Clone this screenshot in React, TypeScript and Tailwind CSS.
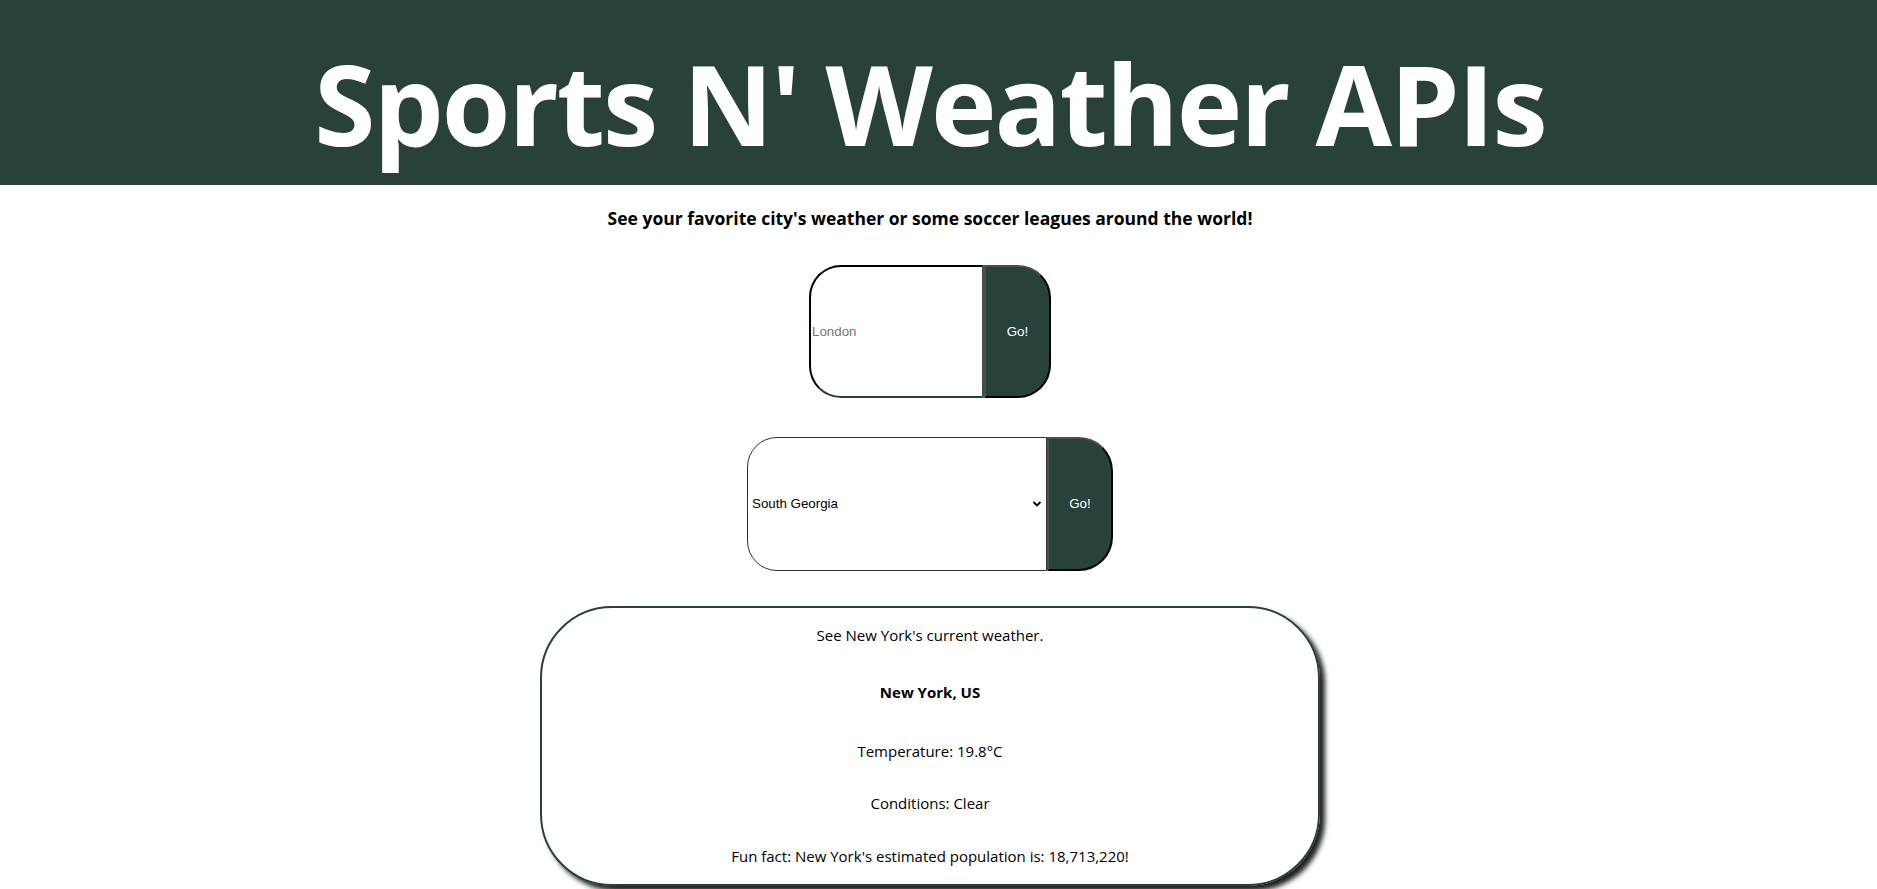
import React from "react";

export default function App() {
  return (
    <div className="min-h-screen bg-white text-black" style={{ fontFamily: '"Open Sans", "Noto Sans", sans-serif' }}>
      <header className="w-full bg-[#28413b] pt-[48px] pb-[26px]">
        <h1 className="pr-[17px] text-center text-[111px] font-bold leading-[111px] text-white tracking-[-2px]">
          Sports N' Weather APIs
        </h1>
      </header>
      <main className="flex flex-col items-center pr-[17px]">
        <p className="mt-[21px] text-[17.5px] font-bold leading-[24px]">
          See your favorite city's weather or some soccer leagues around the world!
        </p>

        <form className="mt-[35px] flex h-[133px]" onSubmit={(e) => e.preventDefault()}>
          <input
            type="text"
            placeholder="London"
            className="h-full w-[175px] rounded-l-[32px] border-2 border-t-black border-l-black border-b-[#2a3f39] border-r-[#4a4a4a] bg-white px-[1px] text-[13.33px] text-black placeholder:text-[#767676] outline-none"
            style={{ fontFamily: '"Liberation Sans", Arial, sans-serif' }}
          />
          <button
            type="submit"
            className="h-full w-[67px] rounded-r-[33px] border-2 border-t-[#4a4f4d] border-l-[#4a4f4d] border-r-black border-b-black bg-[#27413b] text-[13.33px] text-white"
            style={{ fontFamily: '"Liberation Sans", Arial, sans-serif' }}
          >
            Go!
          </button>
        </form>

        <form className="mt-[39px] flex h-[134px]" onSubmit={(e) => e.preventDefault()}>
          <div className="relative h-full w-[300px]">
            <select
              defaultValue="South Georgia"
              className="h-full w-full appearance-none rounded-l-[30px] border border-[#333] bg-white pl-[4px] text-[13.33px] text-black outline-none"
              style={{ fontFamily: '"Liberation Sans", Arial, sans-serif' }}
            >
              <option>South Georgia</option>
              <option>England</option>
              <option>Spain</option>
            </select>
            <svg className="pointer-events-none absolute right-[5px] top-1/2 -mt-[4px]" width="10" height="8" viewBox="0 0 10 8">
              <path d="M1.5 2 L5 5.5 L8.5 2" stroke="black" strokeWidth="1.8" fill="none" />
            </svg>
          </div>
          <button
            type="submit"
            className="h-full w-[66px] rounded-r-[34px] border-2 border-t-[#4a4f4d] border-l-[#4a4f4d] border-r-black border-b-black bg-[#27413b] text-[13.33px] text-white"
            style={{ fontFamily: '"Liberation Sans", Arial, sans-serif' }}
          >
            Go!
          </button>
        </form>

        <section className="mt-[35px] mb-[10px] flex h-[280px] w-[780px] flex-col items-center rounded-[72px] border-2 border-[#28403a] text-[15px] leading-[21px] shadow-[5px_5px_5px_#222]">
          <p className="mt-[17px]">See New York's current weather.</p>
          <p className="mt-[36px] font-bold">New York, US</p>
          <p className="mt-[38px]">Temperature: 19.8°C</p>
          <p className="mt-[31px]">Conditions: Clear</p>
          <p className="mt-[32px]">Fun fact: New York's estimated population is: 18,713,220!</p>
        </section>
      </main>
    </div>
  );
}
